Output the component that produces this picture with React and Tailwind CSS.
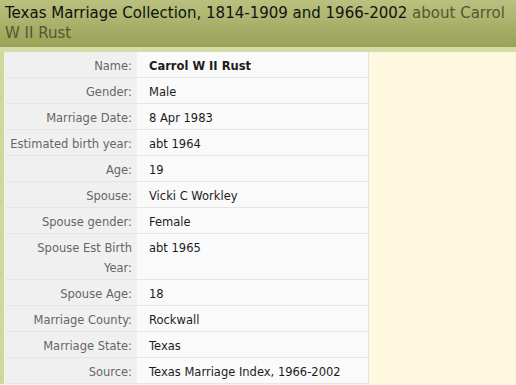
import React from "react";

const rows = [
  { label: "Name:", value: "Carrol W II Rust", bold: true },
  { label: "Gender:", value: "Male" },
  { label: "Marriage Date:", value: "8 Apr 1983" },
  { label: "Estimated birth year:", value: "abt 1964" },
  { label: "Age:", value: "19" },
  { label: "Spouse:", value: "Vicki C Workley" },
  { label: "Spouse gender:", value: "Female" },
  { label: ["Spouse Est Birth", "Year:"], value: "abt 1965" },
  { label: "Spouse Age:", value: "18" },
  { label: "Marriage County:", value: "Rockwall" },
  { label: "Marriage State:", value: "Texas" },
  { label: "Source:", value: "Texas Marriage Index, 1966-2002" },
];

export default function App() {
  return (
    <div className="w-[516px] h-[385px] overflow-hidden bg-[#fff8e1] font-['DejaVu_Sans',sans-serif]">
      <div className="h-[47px] px-[5px] pt-[3px] bg-gradient-to-b from-[#bac17f] to-[#98a257] text-[15px] leading-[20px] text-[#111]">
        Texas Marriage Collection, 1814-1909 and 1966-2002{" "}
        <span className="text-[#55562f]">about Carrol W II Rust</span>
      </div>
      <div className="h-[5px] bg-[#d6dca8]" />
      <div className="flex">
        <div className="w-[5px] bg-[#cfd89a] border-r border-[#f4f6e4]" />
        <div className="w-[364px] border-r border-[#e2e2e2]">
          {rows.map((r, i) => (
            <div key={i} className="flex border-b border-[#e6e6e6] text-[11.5px] leading-[20px]">
              <div className="w-[132px] bg-[#f0f0f0] pr-[5px] pt-[4px] pb-[1px] text-right text-[#666]">
                {Array.isArray(r.label) ? (
                  <>
                    {r.label[0]}
                    <br />
                    {r.label[1]}
                  </>
                ) : (
                  r.label
                )}
              </div>
              <div
                className={
                  "flex-1 bg-[#fafafa] pl-[12px] pt-[4px] pb-[1px] text-[#1c1c1c] " +
                  (r.bold ? "font-bold" : "")
                }
              >
                {r.value}
              </div>
            </div>
          ))}
        </div>
        <div className="flex-1" />
      </div>
    </div>
  );
}
